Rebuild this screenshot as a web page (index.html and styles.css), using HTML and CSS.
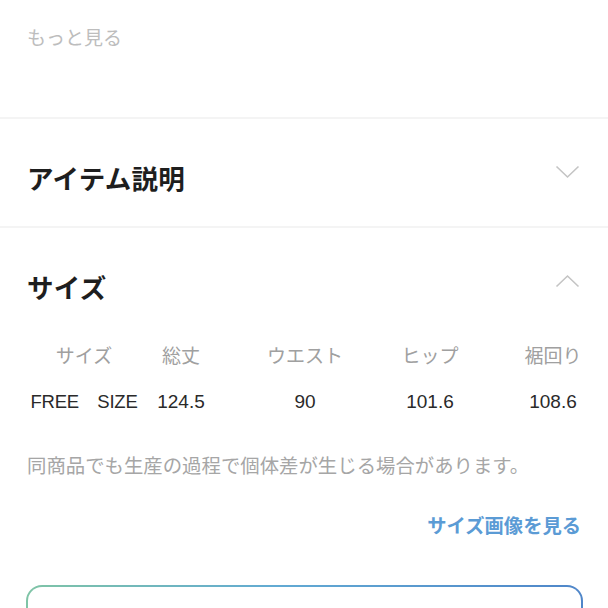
FILE: index.html
```html
<!DOCTYPE html>
<html lang="ja">
<head>
<meta charset="utf-8">
<link rel="stylesheet" href="styles.css">
</head>
<body>
<div class="page">
  <section class="more">
    <span class="more-link">もっと見る</span>
  </section>
  <div class="divider"></div>
  <section class="acc-head acc-first">
    <h2 class="acc-title">アイテム説明</h2>
    <svg class="chev" width="25" height="14" viewBox="0 0 25 14"><polyline points="1.5,1.5 12.5,12 23.5,1.5" fill="none" stroke="#c4c4c4" stroke-width="1.6"/></svg>
  </section>
  <div class="divider"></div>
  <section class="size">
    <div class="acc-head acc-size">
      <h2 class="acc-title">サイズ</h2>
      <svg class="chev" width="25" height="14" viewBox="0 0 25 14"><polyline points="1.5,12.5 12.5,2 23.5,12.5" fill="none" stroke="#c4c4c4" stroke-width="1.6"/></svg>
    </div>
    <div class="table">
      <div class="row head">
        <span class="cell">サイズ</span>
        <span class="cell">総丈</span>
        <span class="cell">ウエスト</span>
        <span class="cell">ヒップ</span>
        <span class="cell last">裾回り</span>
      </div>
      <div class="row data">
        <span class="cell free">FREE　SIZE</span>
        <span class="cell">124.5</span>
        <span class="cell">90</span>
        <span class="cell">101.6</span>
        <span class="cell last">108.6</span>
      </div>
    </div>
    <p class="note">同商品でも生産の過程で個体差が生じる場合があります。</p>
    <div class="link-row"><a class="size-link">サイズ画像を見る</a></div>
    <div class="btn"></div>
  </section>
</div>
</body>
</html>
```

FILE: styles.css
```css
html, body {
  margin: 0;
  padding: 0;
  background: #ffffff;
}
body {
  font-family: "Liberation Sans", "Noto Sans CJK JP", sans-serif;
  color: #222222;
  overflow: hidden;
}
.page {
  width: 608px;
}
.more {
  height: 117px;
  box-sizing: border-box;
  padding: 25px 27px 0;
}
.more-link {
  display: block;
  font-size: 19px;
  line-height: 28px;
  color: #bdbdbd;
}
.divider {
  height: 2px;
  background: #f4f4f4;
}
.acc-head {
  display: flex;
  align-items: center;
  justify-content: space-between;
  padding: 0 27px 0 27px;
}
.acc-first {
  height: 107px;
  box-sizing: border-box;
  padding-top: 14px;
}
.acc-size {
  padding-top: 45px;
  height: 77px;
  box-sizing: border-box;
}
.acc-title {
  margin: 0;
  font-size: 26.5px;
  line-height: 32px;
  font-weight: 700;
  color: #1e1e1e;
  letter-spacing: 0.3px;
}
.chev {
  display: block;
  margin-bottom: 16px;
  margin-right: 1px;
}
.table {
  margin-top: 29px;
  padding: 0 27px;
}
.row {
  display: grid;
  grid-template-columns: 114px 80px 168px 82px 1fr;
  height: 45px;
  line-height: 45px;
  font-size: 19px;
}
.cell {
  text-align: center;
  white-space: nowrap;
}
.cell.free {
  font-size: 18.5px;
  letter-spacing: -0.2px;
}
.cell.last {
  justify-self: end;
  width: 58px;
  margin-right: -1px;
}
.head .cell {
  color: #a0a0a0;
  font-weight: 400;
}
.data .cell {
  color: #2a2a2a;
}
.note {
  margin: 27px 0 0;
  padding: 0 27px;
  font-size: 19.4px;
  line-height: 30px;
  color: #a6a6a6;
}
.link-row {
  display: flex;
  justify-content: flex-end;
  margin-top: 31px;
  padding-right: 27px;
}
.size-link {
  font-size: 19.3px;
  line-height: 30px;
  font-weight: 700;
  color: #5b9bd5;
}
.btn {
  margin: 43px 25px 0 26px;
  height: 56px;
  border-radius: 16px;
  border: 2px solid transparent;
  background:
    linear-gradient(#ffffff, #ffffff) padding-box,
    linear-gradient(90deg, #7fc4a6 0%, #62aad3 45%, #4f86c9 100%) border-box;
}
```
